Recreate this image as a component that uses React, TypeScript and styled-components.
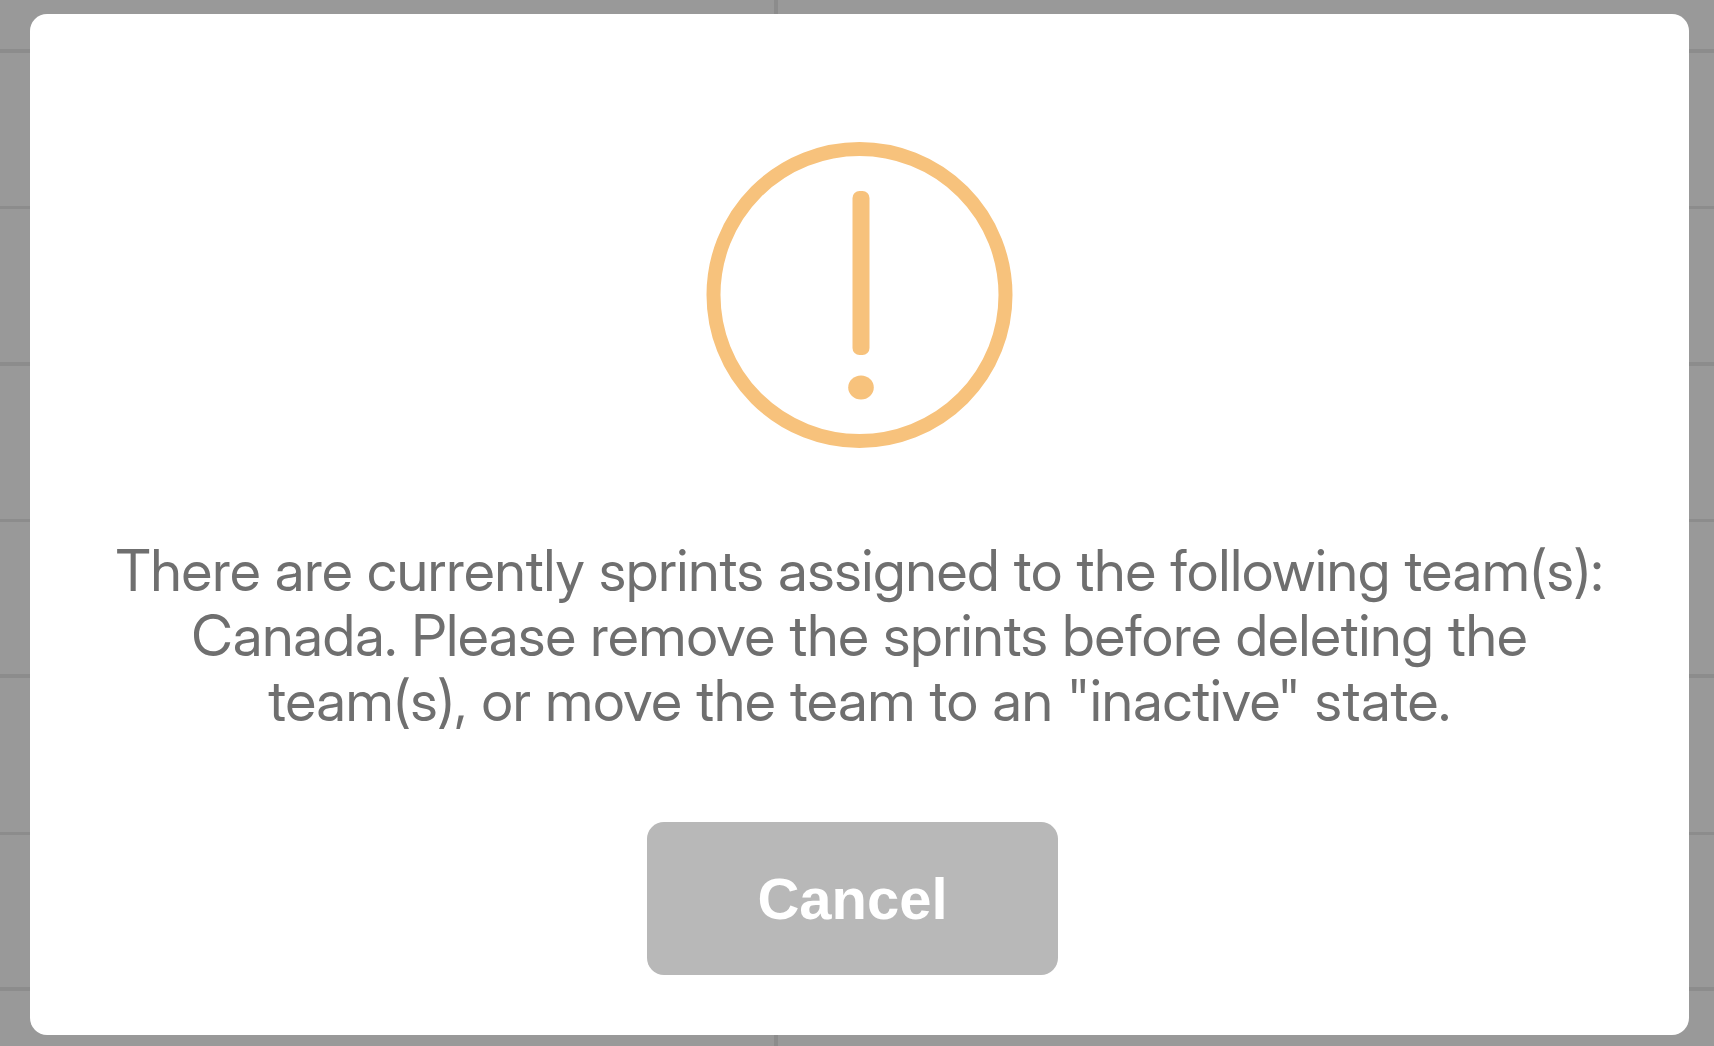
import React from "react";
import styled, { createGlobalStyle } from "styled-components";

const GlobalStyle = createGlobalStyle`
  *, *::before, *::after {
    box-sizing: border-box;
  }
  body {
    margin: 0;
    background: #999999;
    font-family: "Inter Display", Inter, "Liberation Sans", sans-serif;
  }
`;

const Page = styled.div`
  height: 100vh;
  overflow: hidden;
  background: #999999;
`;

const GridRow = styled.div<{ $thick: boolean }>`
  display: grid;
  grid-template-columns: 45.4% 1fr;
  height: 156px;
  border-bottom: ${(p) => (p.$thick ? 4 : 3)}px solid #8c8c8c;

  &:nth-child(3n) {
    height: 157px;
  }
  &:first-child {
    height: 53px;
  }
`;

const GridCell = styled.div`
  &:first-child {
    border-right: 4px solid #8c8c8c;
  }
`;

const Overlay = styled.div`
  position: fixed;
  inset: 0;
  display: flex;
  align-items: flex-start;
  padding: 14px 25px 13px 30px;
`;

const Dialog = styled.div`
  flex: 1;
  display: flex;
  flex-direction: column;
  align-items: center;
  padding: 128px 64px 60px;
  border-radius: 17px;
  background: #ffffff;
`;

const WarningIcon = styled.svg`
  display: block;
  width: 305px;
  height: 306px;
  overflow: visible;
`;

const Message = styled.p`
  margin: 90px 0 89px;
  color: #6f6f6f;
  font-size: 57px;
  font-weight: 400;
  line-height: 65px;
  text-align: center;
`;

const Actions = styled.div`
  display: flex;
  justify-content: center;
  padding-right: 14px;
`;

const CancelButton = styled.button`
  padding: 43px 110px;
  border: 0;
  border-radius: 17px;
  background: #b8b8b8;
  color: #ffffff;
  font-family: "Liberation Sans", Arial, sans-serif;
  font-size: 58px;
  font-weight: 700;
  line-height: 67px;
  cursor: pointer;
`;

const rows = [0, 1, 2, 3, 4, 5, 6, 7];

export default function App() {
  return (
    <>
      <GlobalStyle />
      <Page aria-hidden="true">
        {rows.map((row) => (
          <GridRow key={row} $thick={row % 2 === 0}>
            <GridCell />
            <GridCell />
          </GridRow>
        ))}
      </Page>
      <Overlay>
        <Dialog role="alertdialog" aria-modal="true" aria-describedby="dialog-message">
          <WarningIcon viewBox="0 0 305 306" aria-hidden="true">
            <circle cx="152.5" cy="153" r="146" fill="none" stroke="#f7c27c" strokeWidth="14" />
            <rect x="145.5" y="49" width="17" height="164" rx="7" fill="#f7c27c" />
            <ellipse cx="154" cy="245.5" rx="12.8" ry="12" fill="#f7c27c" />
          </WarningIcon>
          <Message id="dialog-message">
            There are currently sprints assigned to the following team(s):
            Canada. Please remove the sprints before deleting the team(s), or
            move the team to an "inactive" state.
          </Message>
          <Actions>
            <CancelButton type="button">Cancel</CancelButton>
          </Actions>
        </Dialog>
      </Overlay>
    </>
  );
}
